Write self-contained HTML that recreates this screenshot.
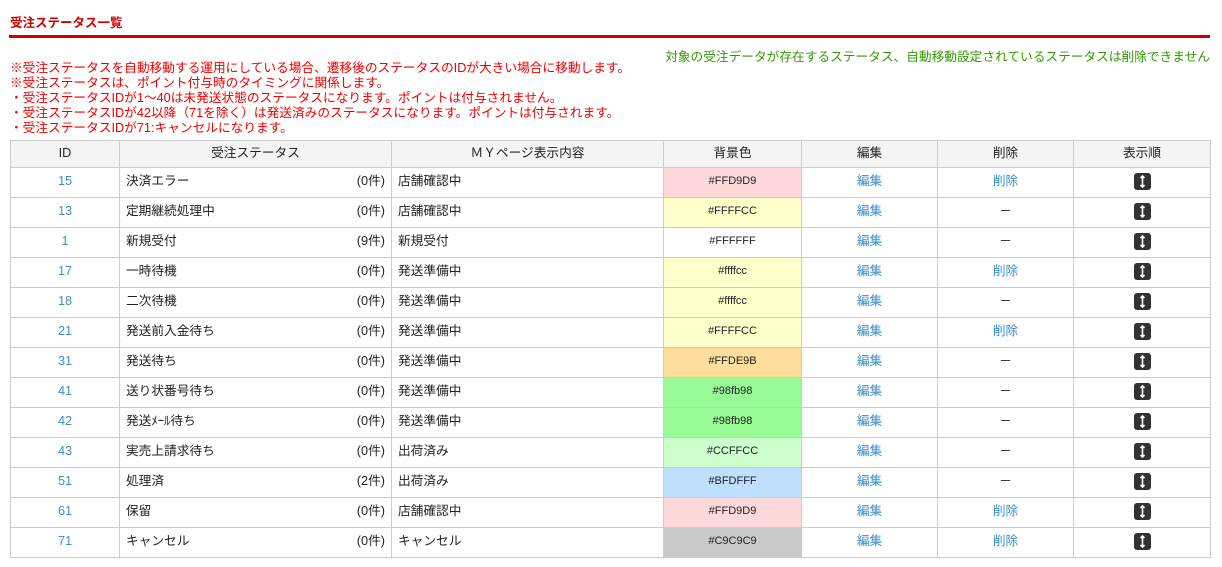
<!DOCTYPE html>
<html><head><meta charset="utf-8"><style>
body{margin:0;background:#fff;font-family:"Liberation Sans","Noto Sans CJK JP",sans-serif;font-size:12.7px;color:#333;}
.t{position:absolute;left:10px;top:12px;font-size:12.5px;font-weight:bold;color:#c00;}
.line{position:absolute;left:9px;top:35px;width:1201px;height:3px;background:#c00;}
.g{position:absolute;right:12px;top:46px;color:#390;}
.n{position:absolute;left:10px;top:61px;color:#e00;line-height:15px;}
table{position:absolute;left:10px;top:140px;border-collapse:collapse;width:1200px;table-layout:fixed;}
td,th{border:1px solid #ccc;height:27px;padding:0 6px 2px;font-weight:normal;color:#222;white-space:nowrap;line-height:15px;}
th{height:24px;background:#f3f4f3;text-align:center;}
.c{text-align:center}
.h{font-size:11px}
a{color:#3a8fc8;text-decoration:none}
.id{color:#3a8fc8;text-align:center}
.cnt{float:right}
.ic{display:inline-block;width:17px;height:17px;background:#333;border-radius:3px;vertical-align:middle;position:relative}
.ic svg{position:absolute;left:0;top:0}
</style></head><body>
<div class="t">受注ステータス一覧</div>
<div class="line"></div>
<div class="g">対象の受注データが存在するステータス、自動移動設定されているステータスは削除できません</div>
<div class="n">※受注ステータスを自動移動する運用にしている場合、遷移後のステータスのIDが大きい場合に移動します。<br>※受注ステータスは、ポイント付与時のタイミングに関係します。<br>・受注ステータスIDが1～40は未発送状態のステータスになります。ポイントは付与されません。<br>・受注ステータスIDが42以降（71を除く）は発送済みのステータスになります。ポイントは付与されます。<br>・受注ステータスIDが71:キャンセルになります。</div>
<table>
<colgroup><col style="width:109px"><col style="width:272px"><col style="width:272px"><col style="width:138px"><col style="width:136px"><col style="width:136px"><col style="width:137px"></colgroup>
<tr><th>ID</th><th>受注ステータス</th><th>ＭＹページ表示内容</th><th>背景色</th><th>編集</th><th>削除</th><th>表示順</th></tr>
<tr><td class="id">15</td><td>決済エラー<span class="cnt">(0件)</span></td><td>店舗確認中</td><td class="c h" style="background:#FFD9D9">#FFD9D9</td><td class="c"><a>編集</a></td><td class="c"><a>削除</a></td><td class="c"><span class="ic"><svg width="17" height="17"><path d="M8.5 3v11M6.5 5l2-2 2 2M6.5 12l2 2 2-2" stroke="#fff" stroke-width="1.6" fill="none"/></svg></span></td></tr>
<tr><td class="id">13</td><td>定期継続処理中<span class="cnt">(0件)</span></td><td>店舗確認中</td><td class="c h" style="background:#FFFFCC">#FFFFCC</td><td class="c"><a>編集</a></td><td class="c">－</td><td class="c"><span class="ic"><svg width="17" height="17"><path d="M8.5 3v11M6.5 5l2-2 2 2M6.5 12l2 2 2-2" stroke="#fff" stroke-width="1.6" fill="none"/></svg></span></td></tr>
<tr><td class="id">1</td><td>新規受付<span class="cnt">(9件)</span></td><td>新規受付</td><td class="c h" style="background:#FFFFFF">#FFFFFF</td><td class="c"><a>編集</a></td><td class="c">－</td><td class="c"><span class="ic"><svg width="17" height="17"><path d="M8.5 3v11M6.5 5l2-2 2 2M6.5 12l2 2 2-2" stroke="#fff" stroke-width="1.6" fill="none"/></svg></span></td></tr>
<tr><td class="id">17</td><td>一時待機<span class="cnt">(0件)</span></td><td>発送準備中</td><td class="c h" style="background:#ffffcc">#ffffcc</td><td class="c"><a>編集</a></td><td class="c"><a>削除</a></td><td class="c"><span class="ic"><svg width="17" height="17"><path d="M8.5 3v11M6.5 5l2-2 2 2M6.5 12l2 2 2-2" stroke="#fff" stroke-width="1.6" fill="none"/></svg></span></td></tr>
<tr><td class="id">18</td><td>二次待機<span class="cnt">(0件)</span></td><td>発送準備中</td><td class="c h" style="background:#ffffcc">#ffffcc</td><td class="c"><a>編集</a></td><td class="c">－</td><td class="c"><span class="ic"><svg width="17" height="17"><path d="M8.5 3v11M6.5 5l2-2 2 2M6.5 12l2 2 2-2" stroke="#fff" stroke-width="1.6" fill="none"/></svg></span></td></tr>
<tr><td class="id">21</td><td>発送前入金待ち<span class="cnt">(0件)</span></td><td>発送準備中</td><td class="c h" style="background:#FFFFCC">#FFFFCC</td><td class="c"><a>編集</a></td><td class="c"><a>削除</a></td><td class="c"><span class="ic"><svg width="17" height="17"><path d="M8.5 3v11M6.5 5l2-2 2 2M6.5 12l2 2 2-2" stroke="#fff" stroke-width="1.6" fill="none"/></svg></span></td></tr>
<tr><td class="id">31</td><td>発送待ち<span class="cnt">(0件)</span></td><td>発送準備中</td><td class="c h" style="background:#FFDE9B">#FFDE9B</td><td class="c"><a>編集</a></td><td class="c">－</td><td class="c"><span class="ic"><svg width="17" height="17"><path d="M8.5 3v11M6.5 5l2-2 2 2M6.5 12l2 2 2-2" stroke="#fff" stroke-width="1.6" fill="none"/></svg></span></td></tr>
<tr><td class="id">41</td><td>送り状番号待ち<span class="cnt">(0件)</span></td><td>発送準備中</td><td class="c h" style="background:#98fb98">#98fb98</td><td class="c"><a>編集</a></td><td class="c">－</td><td class="c"><span class="ic"><svg width="17" height="17"><path d="M8.5 3v11M6.5 5l2-2 2 2M6.5 12l2 2 2-2" stroke="#fff" stroke-width="1.6" fill="none"/></svg></span></td></tr>
<tr><td class="id">42</td><td>発送ﾒｰﾙ待ち<span class="cnt">(0件)</span></td><td>発送準備中</td><td class="c h" style="background:#98fb98">#98fb98</td><td class="c"><a>編集</a></td><td class="c">－</td><td class="c"><span class="ic"><svg width="17" height="17"><path d="M8.5 3v11M6.5 5l2-2 2 2M6.5 12l2 2 2-2" stroke="#fff" stroke-width="1.6" fill="none"/></svg></span></td></tr>
<tr><td class="id">43</td><td>実売上請求待ち<span class="cnt">(0件)</span></td><td>出荷済み</td><td class="c h" style="background:#CCFFCC">#CCFFCC</td><td class="c"><a>編集</a></td><td class="c">－</td><td class="c"><span class="ic"><svg width="17" height="17"><path d="M8.5 3v11M6.5 5l2-2 2 2M6.5 12l2 2 2-2" stroke="#fff" stroke-width="1.6" fill="none"/></svg></span></td></tr>
<tr><td class="id">51</td><td>処理済<span class="cnt">(2件)</span></td><td>出荷済み</td><td class="c h" style="background:#BFDFFF">#BFDFFF</td><td class="c"><a>編集</a></td><td class="c">－</td><td class="c"><span class="ic"><svg width="17" height="17"><path d="M8.5 3v11M6.5 5l2-2 2 2M6.5 12l2 2 2-2" stroke="#fff" stroke-width="1.6" fill="none"/></svg></span></td></tr>
<tr><td class="id">61</td><td>保留<span class="cnt">(0件)</span></td><td>店舗確認中</td><td class="c h" style="background:#FFD9D9">#FFD9D9</td><td class="c"><a>編集</a></td><td class="c"><a>削除</a></td><td class="c"><span class="ic"><svg width="17" height="17"><path d="M8.5 3v11M6.5 5l2-2 2 2M6.5 12l2 2 2-2" stroke="#fff" stroke-width="1.6" fill="none"/></svg></span></td></tr>
<tr><td class="id">71</td><td>キャンセル<span class="cnt">(0件)</span></td><td>キャンセル</td><td class="c h" style="background:#C9C9C9">#C9C9C9</td><td class="c"><a>編集</a></td><td class="c"><a>削除</a></td><td class="c"><span class="ic"><svg width="17" height="17"><path d="M8.5 3v11M6.5 5l2-2 2 2M6.5 12l2 2 2-2" stroke="#fff" stroke-width="1.6" fill="none"/></svg></span></td></tr>
</table>
</body></html>
